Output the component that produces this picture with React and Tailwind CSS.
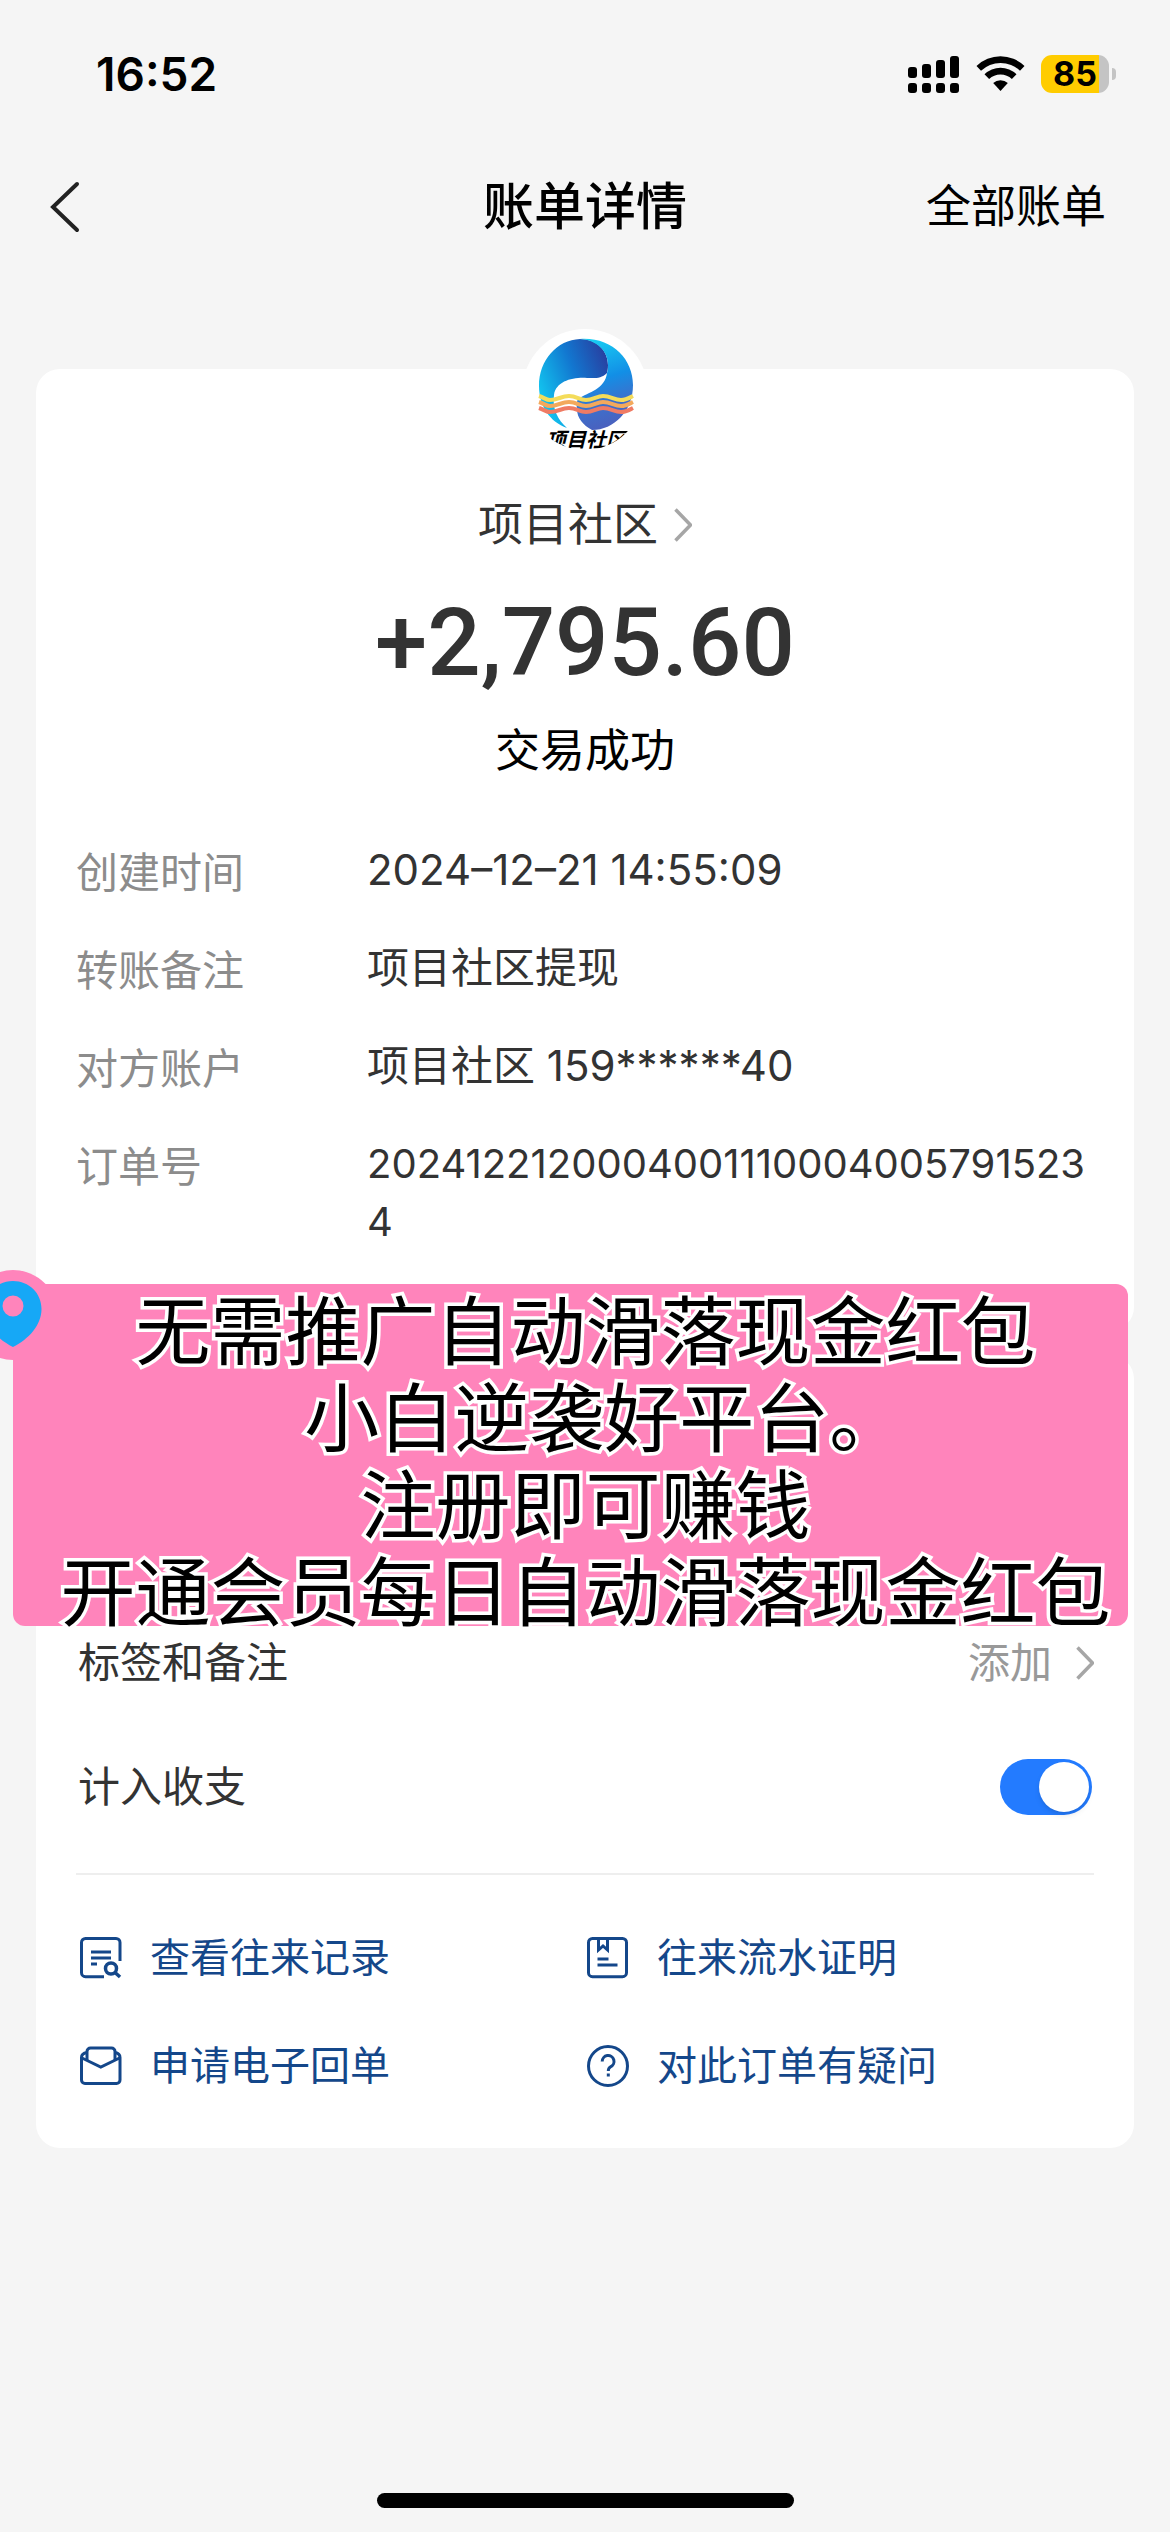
import { useState } from "react";

const details = [
  { label: "创建时间", value: "2024–12–21 14:55:09" },
  { label: "转账备注", value: "项目社区提现" },
  { label: "对方账户", value: "项目社区 159******40" },
  { label: "订单号", value: "20241221200040011100040057915234", long: true },
];

const promoLines = [
  "无需推广自动滑落现金红包",
  "小白逆袭好平台。",
  "注册即可赚钱",
  "开通会员每日自动滑落现金红包",
];

function StatusBar() {
  return (
    <div className="flex h-[148px] items-center justify-between pl-24 pr-[54px]">
      <span className="text-[46px] leading-[60px] font-semibold text-black">16:52</span>
      <div className="flex items-center">
        <svg className="mr-4 h-[38px] w-[52px]" viewBox="0 0 52 38" fill="#000">
          <rect x="0" y="12" width="9" height="11" rx="3" />
          <rect x="14" y="9" width="9" height="14" rx="3" />
          <rect x="28" y="5" width="9" height="18" rx="3" />
          <rect x="42" y="1" width="9" height="22" rx="3" />
          <rect x="0" y="28" width="9" height="10" rx="3" />
          <rect x="14" y="28" width="9" height="10" rx="3" />
          <rect x="28" y="28" width="9" height="10" rx="3" />
          <rect x="42" y="28" width="9" height="10" rx="3" />
        </svg>
        <svg className="mr-4 h-[38px] w-[49px]" viewBox="0 0 49 38" fill="#000">
          <path d="M0.5 11 A34.500 34.500 0 0 1 48.500 11 L44 15.800 A28 28 0 0 0 5 15.800 Z" />
          <path d="M8.500 19.300 A23 23 0 0 1 40.500 19.300 L35.900 24 A16.500 16.500 0 0 0 13.100 24 Z" />
          <path d="M17.200 28 A11 11 0 0 1 31.800 28 L24.500 36 Z" />
        </svg>
        <div className="flex h-[38px] w-[68px] items-center justify-center rounded-[11px] bg-linear-to-r from-[#ffcc00] from-85% to-[#c4c4c4] to-85%">
          <span className="text-[34px] leading-[38px] font-bold text-black">85</span>
        </div>
        <div className="ml-[3px] h-3 w-1 rounded-r-full bg-[#c4c4c4]" />
      </div>
    </div>
  );
}

function Chevron() {
  return (
    <svg className="h-[34px] w-[18px]" viewBox="0 0 18 34" fill="none" stroke="#a6a6a6" strokeWidth="3.500">
      <path d="M1.500 1.500 L16.500 17 L1.500 32.500" />
    </svg>
  );
}

function Logo() {
  return (
    <svg className="h-[120px] w-[120px]" viewBox="0 0 120 120">
      <defs>
        <linearGradient id="left" x1="0" y1="0.6" x2="1" y2="0.1">
          <stop offset="0" stopColor="#12c4ef" />
          <stop offset="0.5" stopColor="#1277d0" />
          <stop offset="1" stopColor="#2a3a9c" />
        </linearGradient>
        <linearGradient id="right" x1="0.3" y1="0" x2="0.5" y2="1">
          <stop offset="0" stopColor="#18cdf3" />
          <stop offset="0.45" stopColor="#128fe6" />
          <stop offset="0.75" stopColor="#3e6fcb" />
          <stop offset="1" stopColor="#4b5fbd" />
        </linearGradient>
        <clipPath id="round">
          <circle cx="60" cy="60" r="58" />
        </clipPath>
      </defs>
      <g clipPath="url(#round)">
        <path
          fill="url(#left)"
          d="M55 7 C72 7 83 19 83 33 C83 37 82.500 39 82 41 C76 47 70 46 62 46 C48 45 31 49 29 63 C27 77 33 88 42 96 C25 90 14 74 14 54 C14 28 32 8 55 7 Z"
        />
        <path
          fill="url(#right)"
          d="M55 7 C87 5 108 27 108 53 C108 79 89 98 67 98 C58 93 52 86 52 77 C51 72 52 69 53 67 C64 60 80 57 82 41 C83 38 83 36 83 33 C83 19 72 8 55 7 Z"
        />
        <g fill="none" strokeWidth="4">
          <path stroke="#f4dc5a" d="M14 64 C20 66 21 68 25 68 C33 68 36 64 44 64 C52 64 54 68 61 68 C68 68 72 64 78 64 C86 64 89 68 96 68 C101 68 104 66 108 64" />
          <path stroke="#f3a95c" d="M14 70 C20 72 21 74 25 74 C33 74 36 70 44 70 C52 70 54 74 61 74 C68 74 72 70 78 70 C86 70 89 74 96 74 C101 74 104 72 108 70" />
          <path stroke="#ef7b64" d="M14 76 C20 78 21 80 25 80 C33 80 36 76 44 76 C52 76 54 80 61 80 C68 80 72 76 78 76 C86 76 89 80 96 80 C101 80 104 78 108 76" />
        </g>
        <text x="61" y="115" textAnchor="middle" fontSize="20" fontWeight="700" fontStyle="italic" fill="#000">
          项目社区
        </text>
      </g>
    </svg>
  );
}

function RecordIcon() {
  return (
    <svg className="h-[42px] w-[42px]" viewBox="0 0 42 42" fill="none" stroke="#14478a" strokeWidth="3">
      <path d="M24 39.700 H5.500 A4 4 0 0 1 1.500 35.700 V5.500 A4 4 0 0 1 5.500 1.500 H36 A4 4 0 0 1 40 5.500 V24" />
      <path d="M11 15 H31 M11 21 H31 M11 27 H17" />
      <circle cx="31" cy="31.500" r="5.500" strokeWidth="3.500" />
      <path d="M35 35.500 L40 40" strokeWidth="3.500" />
    </svg>
  );
}

function ProofIcon() {
  return (
    <svg className="h-[42px] w-[42px]" viewBox="0 0 42 42" fill="none" stroke="#14478a" strokeWidth="3">
      <rect x="1.500" y="1.500" width="38" height="38.200" rx="4" />
      <path d="M11.500 2 V13 L16 9 L20.500 13 V2" />
      <path d="M10.500 22 H21.500 M10.500 28 H30.500" />
    </svg>
  );
}

function ReceiptIcon() {
  return (
    <svg className="h-[42px] w-[42px]" viewBox="0 0 42 42" fill="none" stroke="#14478a" strokeWidth="3">
      <path d="M7 7.500 C4 8 1.500 9.500 1.500 12.500 V35 A3.500 3.500 0 0 0 5 38.500 H36.500 A3.500 3.500 0 0 0 40 35 V12.500 C40 9.500 38 8 35 7.500" />
      <path d="M2 13 L20.800 22 L39.500 13" />
      <path d="M7 15.500 V6.500 A3.500 3.500 0 0 1 10.500 3 H31.500 A3.500 3.500 0 0 1 35 6.500 V15.500" />
    </svg>
  );
}

function QuestionIcon() {
  return (
    <svg className="h-[42px] w-[42px]" viewBox="0 0 42 42" fill="none" stroke="#14478a" strokeWidth="3">
      <circle cx="21" cy="21" r="19.500" />
      <path d="M15.200 16.500 A5.900 5.900 0 1 1 23.500 21.800 C21.800 22.700 21.300 23.300 21.300 26" />
      <path d="M21.300 28.500 V31.500" />
    </svg>
  );
}

const links = [
  { text: "查看往来记录", Icon: RecordIcon },
  { text: "往来流水证明", Icon: ProofIcon },
  { text: "申请电子回单", Icon: ReceiptIcon },
  { text: "对此订单有疑问", Icon: QuestionIcon },
];

function PromoBanner() {
  return (
    <div className="absolute -top-[71px] right-[6px] -left-[23px]">
      <svg className="absolute -top-[14px] -left-[45px] h-[90px] w-[90px]" viewBox="0 0 90 90">
        <circle cx="45" cy="45" r="45" fill="#ff84bb" />
      </svg>
      <div className="relative h-[342px] rounded-xl bg-[#ff84bb] pt-1 pl-[30px]">
        {promoLines.map((line) => (
          <p
            key={line}
            className="text-center text-[75px] leading-[87px] whitespace-nowrap text-black [-webkit-text-stroke:7px_white] [font-feature-settings:'halt'] [paint-order:stroke_fill]"
          >
            {line}
          </p>
        ))}
      </div>
      <svg className="absolute -top-[3px] -left-[29px] h-[66px] w-[58px]" viewBox="0 0 58 66" fill="#16a8f6">
        <path
          fillRule="evenodd"
          d="M29 0 C45 0 57.500 12 57.500 28 C57.500 44 45 58 29 66 C13 58 0.5 44 0.5 28 C0.5 12 13 0 29 0 Z M29 14.500 A10.500 10.500 0 1 0 29 35.500 A10.500 10.500 0 1 0 29 14.500 Z"
        />
      </svg>
    </div>
  );
}

export default function App() {
  const [counted, setCounted] = useState(true);

  return (
    <div className="flex min-h-screen flex-col overflow-x-hidden bg-[#f5f5f5] font-['Inter','Noto_Sans_CJK_SC',sans-serif] text-[#333333]">
      <StatusBar />

      <header className="grid h-[118px] grid-cols-3 items-center px-[50px] text-black">
        <button type="button" aria-label="返回" className="justify-self-start">
          <svg className="h-[52px] w-[30px]" viewBox="0 0 30 52" fill="none" stroke="#222" strokeWidth="4" strokeLinecap="round">
            <path d="M27 3 L3 26 L27 49" />
          </svg>
        </button>
        <h1 className="text-center text-[51px] leading-[60px] font-medium">账单详情</h1>
        <a href="#all" className="justify-self-end pr-[14px] text-[45px] leading-[60px]">全部账单</a>
      </header>

      <main className="mt-[103px] px-9">
        <section className="rounded-3xl bg-white px-10 pb-20">
          <div className="flex flex-col items-center">
            <div className="-mt-10 flex h-[126px] w-[126px] items-center justify-center rounded-full bg-white">
              <Logo />
            </div>
            <a href="#shop" className="mt-10 flex items-center gap-4 text-[45px] leading-[60px]">
              项目社区
              <Chevron />
            </a>
            <p className="mt-[38px] font-[Roboto] text-[94px] leading-[100px] font-medium">+2,795.60</p>
            <p className="mt-7 text-[45px] leading-[60px] text-black">交易成功</p>
          </div>

          <dl className="mt-[60px] flex flex-col gap-[37px] text-[42px] leading-[58px]">
            {details.map((item) => (
              <div key={item.label} className="flex">
                <dt className="w-[291px] shrink-0 pt-[3px] text-[#8c8c8c]">{item.label}</dt>
                <dd className={item.long ? "min-w-0 flex-1 text-[40px] break-all" : "min-w-0 flex-1"}>{item.value}</dd>
              </div>
            ))}
          </dl>
        </section>

        <section className="relative mt-6 rounded-3xl bg-white px-10 pt-[246px] pb-[52px]">
          <PromoBanner />
          <button type="button" className="flex h-[124px] w-full items-center justify-between pl-[2px] text-[42px] leading-[58px]">
            <span>标签和备注</span>
            <span className="flex items-center gap-6 text-[#999999]">
              添加
              <Chevron />
            </span>
          </button>
          <label className="flex h-[124px] items-center justify-between px-[2px] text-[42px] leading-[58px]">
            计入收支
            <input
              type="checkbox"
              checked={counted}
              onChange={(e) => setCounted(e.target.checked)}
              className="flex h-14 w-[92px] appearance-none items-center rounded-full bg-[#ccc] px-[3px] before:h-[50px] before:w-[50px] before:rounded-full before:bg-white before:shadow-md checked:justify-end checked:bg-[#237bff]"
            />
          </label>
          <hr className="mt-6 border-t-2 border-[#eeeeee]" />
          <nav className="mt-[53px] grid grid-cols-2 gap-y-12 pl-1 text-[40px] leading-[60px] text-[#14478a]">
            {links.map(({ text, Icon }) => (
              <a key={text} href="#more" className="flex items-center gap-7">
                <Icon />
                {text}
              </a>
            ))}
          </nav>
        </section>
      </main>

      <div className="mt-auto flex justify-center pb-6">
        <div className="h-[15px] w-[417px] rounded-full bg-black" />
      </div>
    </div>
  );
}
